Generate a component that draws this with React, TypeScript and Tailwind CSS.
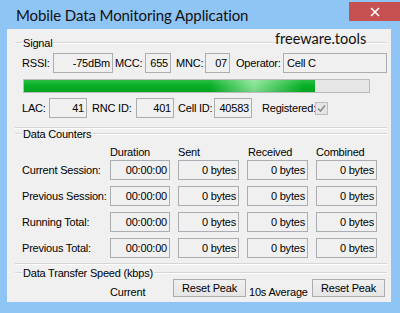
import React from "react";

const Field = ({
	className,
	children,
	left,
}: {
	className: string;
	children: React.ReactNode;
	left?: boolean;
}) => (
	<div
		className={`flex h-[20px] shrink-0 items-center border border-[#abadb3] bg-[#f0f0f0] ${
			left ? "justify-start pl-[3px]" : "justify-end pr-[2px]"
		} ${className}`}>
		{children}
	</div>
);

const GroupHeader = ({ label }: { label: string }) => (
	<div className="flex h-[10px] items-center">
		<div className="w-[7px] border-t border-b border-t-[#d5d5d5] border-b-white" />
		<span className="px-[1px] leading-[10px]">{label}</span>
		<div className="flex-1 border-t border-b border-t-[#d5d5d5] border-b-white" />
	</div>
);

const GroupLine = () => (
	<div className="h-[2px] border-t border-b border-t-[#d5d5d5] border-b-white" />
);

const ROWS = ["Current Session:", "Previous Session:", "Running Total:", "Previous Total:"];

const App: React.FC = () => {
	return (
		<div className="flex h-[313px] w-[400px] flex-col overflow-hidden bg-[#8fc5f5] font-['Liberation_Sans',Arial,sans-serif] text-[11px] tracking-[-0.2px] text-black">
			{/* Title bar */}
			<div className="flex h-[29px] shrink-0">
				<div className="pl-[16px] pt-[4px] font-['Lato',sans-serif] text-[15px] tracking-[-0.1px] text-[#111]">
					Mobile Data Monitoring Application
				</div>
				<div className="ml-auto mt-[2px] flex h-[19px] w-[51px] items-center justify-center bg-[#c75050]">
					<svg width="10" height="10" viewBox="0 0 10 10">
						<path d="M1 1 L9 9 M9 1 L1 9" stroke="white" strokeWidth="1.6" />
					</svg>
				</div>
			</div>

			{/* Client */}
			<div className="relative ml-[7px] h-[273px] w-[384px] bg-[#f0f0f0]">
				<div className="absolute left-[268px] top-[-1px] font-['Lato',sans-serif] text-[14.5px] tracking-normal text-[#111]">
					freeware.tools
				</div>

				<div className="ml-[8px] mr-[4px] flex flex-col">
					{/* Signal */}
					<div className="mt-[9px]">
						<GroupHeader label="Signal" />
					</div>
					<div className="flex flex-col pl-[7px]">
						<div className="mt-[5px] flex items-center">
							<span className="w-[31px] shrink-0">RSSI:</span>
							<Field className="w-[60px]">-75dBm</Field>
							<span className="w-[32px] shrink-0 pl-[2px]">MCC:</span>
							<Field className="w-[26px]">655</Field>
							<span className="w-[34px] shrink-0 pl-[5px]">MNC:</span>
							<Field className="w-[25px]">07</Field>
							<span className="w-[53px] shrink-0 pl-[6px]">Operator:</span>
							<Field className="w-[104px]" left>
								Cell C
							</Field>
						</div>

						<div className="ml-[1px] mt-[6px] h-[14px] w-[347px] border border-[#bcbcbc] bg-[#e6e6e6]">
							<div className="relative h-full w-[291px] bg-[linear-gradient(90deg,#06b025_0%,#06b025_64%,#86e494_79%,#06b025_96%,#06b025_100%)]">
								<div className="absolute inset-0 bg-[linear-gradient(180deg,rgba(255,255,255,0.15)_0%,rgba(255,255,255,0)_50%,rgba(0,0,0,0.08)_100%)]" />
							</div>
						</div>

						<div className="mt-[5px] flex items-center">
							<span className="w-[27px] shrink-0">LAC:</span>
							<Field className="w-[38px]">41</Field>
							<span className="w-[49px] shrink-0 pl-[5px]">RNC ID:</span>
							<Field className="w-[38px]">401</Field>
							<span className="w-[40px] shrink-0 pl-[4px]">Cell ID:</span>
							<Field className="w-[38px]">40583</Field>
							<span className="w-[63px] shrink-0 pl-[10px]">Registered:</span>
							<div className="flex h-[13px] w-[13px] items-center justify-center border border-[#bcbcbc] bg-[#e6e6e6]">
								<svg width="9" height="9" viewBox="0 0 9 9">
									<path d="M1 4.5 L3.5 7 L8 1.5" fill="none" stroke="#8d8d8d" strokeWidth="1.6" />
								</svg>
							</div>
						</div>
					</div>
					<div className="mt-[9px]">
						<GroupLine />
					</div>

					{/* Data Counters */}
					<GroupHeader label="Data Counters" />
					<div className="flex flex-col pl-[7px]">
						<div className="mt-[6px] flex h-[14px] items-center">
							<span className="w-[88px] shrink-0" />
							<span className="w-[68px] shrink-0">Duration</span>
							<span className="w-[69px] shrink-0">Sent</span>
							<span className="w-[69px] shrink-0 pl-[1px]">Received</span>
							<span className="shrink-0">Combined</span>
						</div>
						<div className="mt-[1px] flex flex-col gap-[6px]">
							{ROWS.map((label) => (
								<div key={label} className="flex items-center">
									<span className="w-[88px] shrink-0">{label}</span>
									<Field className="w-[60px]">00:00:00</Field>
									<Field className="ml-[8px] w-[61px]">0 bytes</Field>
									<Field className="ml-[8px] w-[61px]">0 bytes</Field>
									<Field className="ml-[8px] w-[61px]">0 bytes</Field>
								</div>
							))}
						</div>
					</div>
					<div className="mt-[5px]">
						<GroupLine />
					</div>

					{/* Data Transfer Speed */}
					<div className="mt-[3px]">
						<GroupHeader label="Data Transfer Speed (kbps)" />
					</div>
					<div className="mt-[1px] flex items-start pl-[7px]">
						<span className="w-[88px] shrink-0" />
						<span className="mt-[5px] w-[63px] shrink-0">Current</span>
						<button
							type="button"
							className="h-[18px] w-[73px] shrink-0 border border-[#adadad] bg-[linear-gradient(180deg,#f0f0f0,#e5e5e5)] leading-[16px]">
							Reset Peak
						</button>
						<span className="mt-[5px] w-[66px] shrink-0 pl-[3px]">10s Average</span>
						<button
							type="button"
							className="h-[18px] w-[73px] shrink-0 border border-[#adadad] bg-[linear-gradient(180deg,#f0f0f0,#e5e5e5)] leading-[16px]">
							Reset Peak
						</button>
					</div>
				</div>
			</div>
		</div>
	);
};

export default App;
